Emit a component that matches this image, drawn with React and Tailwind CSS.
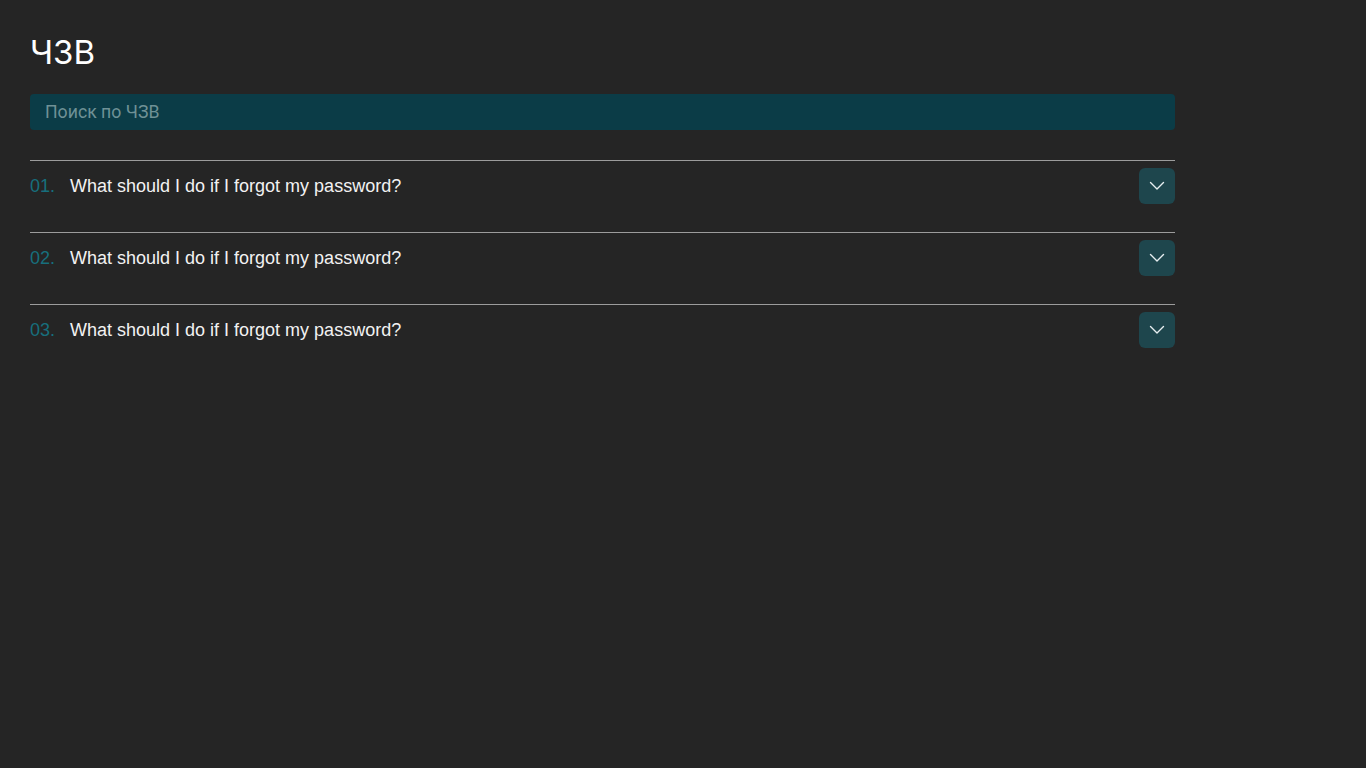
const faqs = [
  { id: '01', question: 'What should I do if I forgot my password?' },
  { id: '02', question: 'What should I do if I forgot my password?' },
  { id: '03', question: 'What should I do if I forgot my password?' },
];

function Chevron() {
  return (
    <svg width="16" height="16" viewBox="0 0 16 16" fill="none" stroke="#e6eef0" strokeWidth="1.4" strokeLinecap="round" strokeLinejoin="round">
      <path d="M1.5 4.5 8 11 14.5 4.5" />
    </svg>
  );
}

export default function App() {
  return (
    <div className="min-h-screen bg-[#252525] px-[30px] pt-8 font-['Liberation_Sans',Arial,sans-serif]">
      <div className="w-[1145px]">
        <h1 className="font-['Inter',sans-serif] text-[33px] leading-10 text-white">ЧЗВ</h1>

        <input
          className="mt-[22px] block h-9 w-full rounded bg-[#0b3c47] px-[15px] font-['Roboto',sans-serif] text-[17.7px] text-white outline-none placeholder:text-[#6f9196]"
          placeholder="Поиск по ЧЗВ"
        />

        <ul className="mt-[30px]">
          {faqs.map((f) => (
            <li key={f.id} className="h-[72px] border-t border-[#9c9c9c] pt-[7px]">
              <div className="flex items-center">
                <span className="w-10 text-lg text-[#176f7d]">{f.id}.</span>
                <span className="flex-1 text-lg leading-6 text-[#f2f2f2]">{f.question}</span>
                <button className="flex h-9 w-9 items-center justify-center rounded-md bg-[#1e464d]">
                  <Chevron />
                </button>
              </div>
            </li>
          ))}
        </ul>
      </div>
    </div>
  );
}
